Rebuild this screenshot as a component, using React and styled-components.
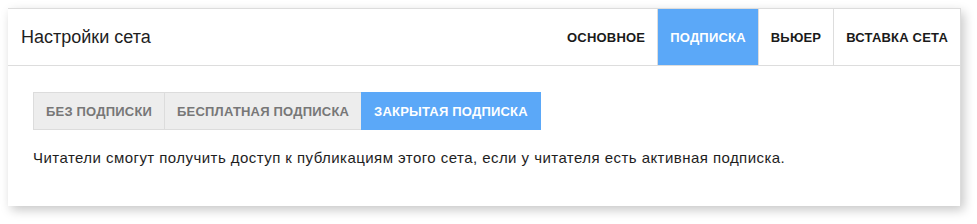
import React, { useState } from 'react';
import styled, { createGlobalStyle } from 'styled-components';

const GlobalStyle = createGlobalStyle`
  body {
    margin: 0;
    background: #fff;
    font-family: "Liberation Sans", Arial, sans-serif;
  }
`;

const tabs = ['Основное', 'Подписка', 'Вьюер', 'Вставка сета'];
const modes = ['Без подписки', 'Бесплатная подписка', 'Закрытая подписка'];

function App() {
  const [tab, setTab] = useState(1);
  const [mode, setMode] = useState(2);

  return (
    <Page>
      <GlobalStyle />
      <Card>
        <Header>
          <Title>Настройки сета</Title>
          <Tabs>
            {tabs.map((t, i) => (
              <Tab key={t} $active={i === tab} $first={i === 0} onClick={() => setTab(i)}>
                {t}
              </Tab>
            ))}
          </Tabs>
        </Header>
        <Body>
          <Segments>
            {modes.map((m, i) => (
              <Segment key={m} $active={i === mode} onClick={() => setMode(i)}>
                {m}
              </Segment>
            ))}
          </Segments>
          <Text>
            Читатели смогут получить доступ к публикациям этого сета, если у читателя есть активная подписка.
          </Text>
        </Body>
      </Card>
    </Page>
  );
}

// Custom CSS
const Page = styled.div`
  padding: 8px 16px 16px 8px;
`;
const Card = styled.div`
  background: #fff;
  border-top: 1px solid #dcdcdc;
  border-right: 1px solid #dcdcdc;
  box-shadow: 3px 4px 10px rgba(0, 0, 0, 0.22);
`;
const Header = styled.div`
  display: flex;
  align-items: stretch;
  justify-content: space-between;
  height: 56px;
  border-bottom: 1px solid #dddddd;
`;
const Title = styled.h1`
  margin: 0;
  padding-left: 13px;
  align-self: center;
  font-size: 18px;
  font-weight: 400;
  color: #1e1e1e;
`;
const Tabs = styled.div`
  display: flex;
`;
const Tab = styled.div`
  display: flex;
  align-items: center;
  padding: 0 12px;
  border-left: 1px solid ${(p) => (p.$first ? 'transparent' : '#dddddd')};
  background: ${(p) => (p.$active ? '#5ba8f8' : '#fff')};
  color: ${(p) => (p.$active ? '#fff' : '#1a1a1a')};
  font-size: 13px;
  font-weight: 700;
  text-transform: uppercase;
  letter-spacing: 0.2px;
  cursor: pointer;
`;
const Body = styled.div`
  padding: 26px 25px 40px;
`;
const Segments = styled.div`
  display: flex;
`;
const Segment = styled.div`
  height: 36px;
  display: flex;
  align-items: center;
  padding: 0 12px;
  border: 1px solid ${(p) => (p.$active ? '#5ba8f8' : '#dcdcdc')};
  margin-left: -1px;
  background: ${(p) => (p.$active ? '#5ba8f8' : '#ededed')};
  color: ${(p) => (p.$active ? '#fff' : '#777')};
  font-size: 13px;
  font-weight: 700;
  text-transform: uppercase;
  letter-spacing: 0.2px;
  cursor: pointer;
  &:first-child {
    margin-left: 0;
  }
`;
const Text = styled.p`
  margin: 19px 0 0;
  font-size: 15px;
  letter-spacing: 0.45px;
  color: #1e1e1e;
`;

export default App;
